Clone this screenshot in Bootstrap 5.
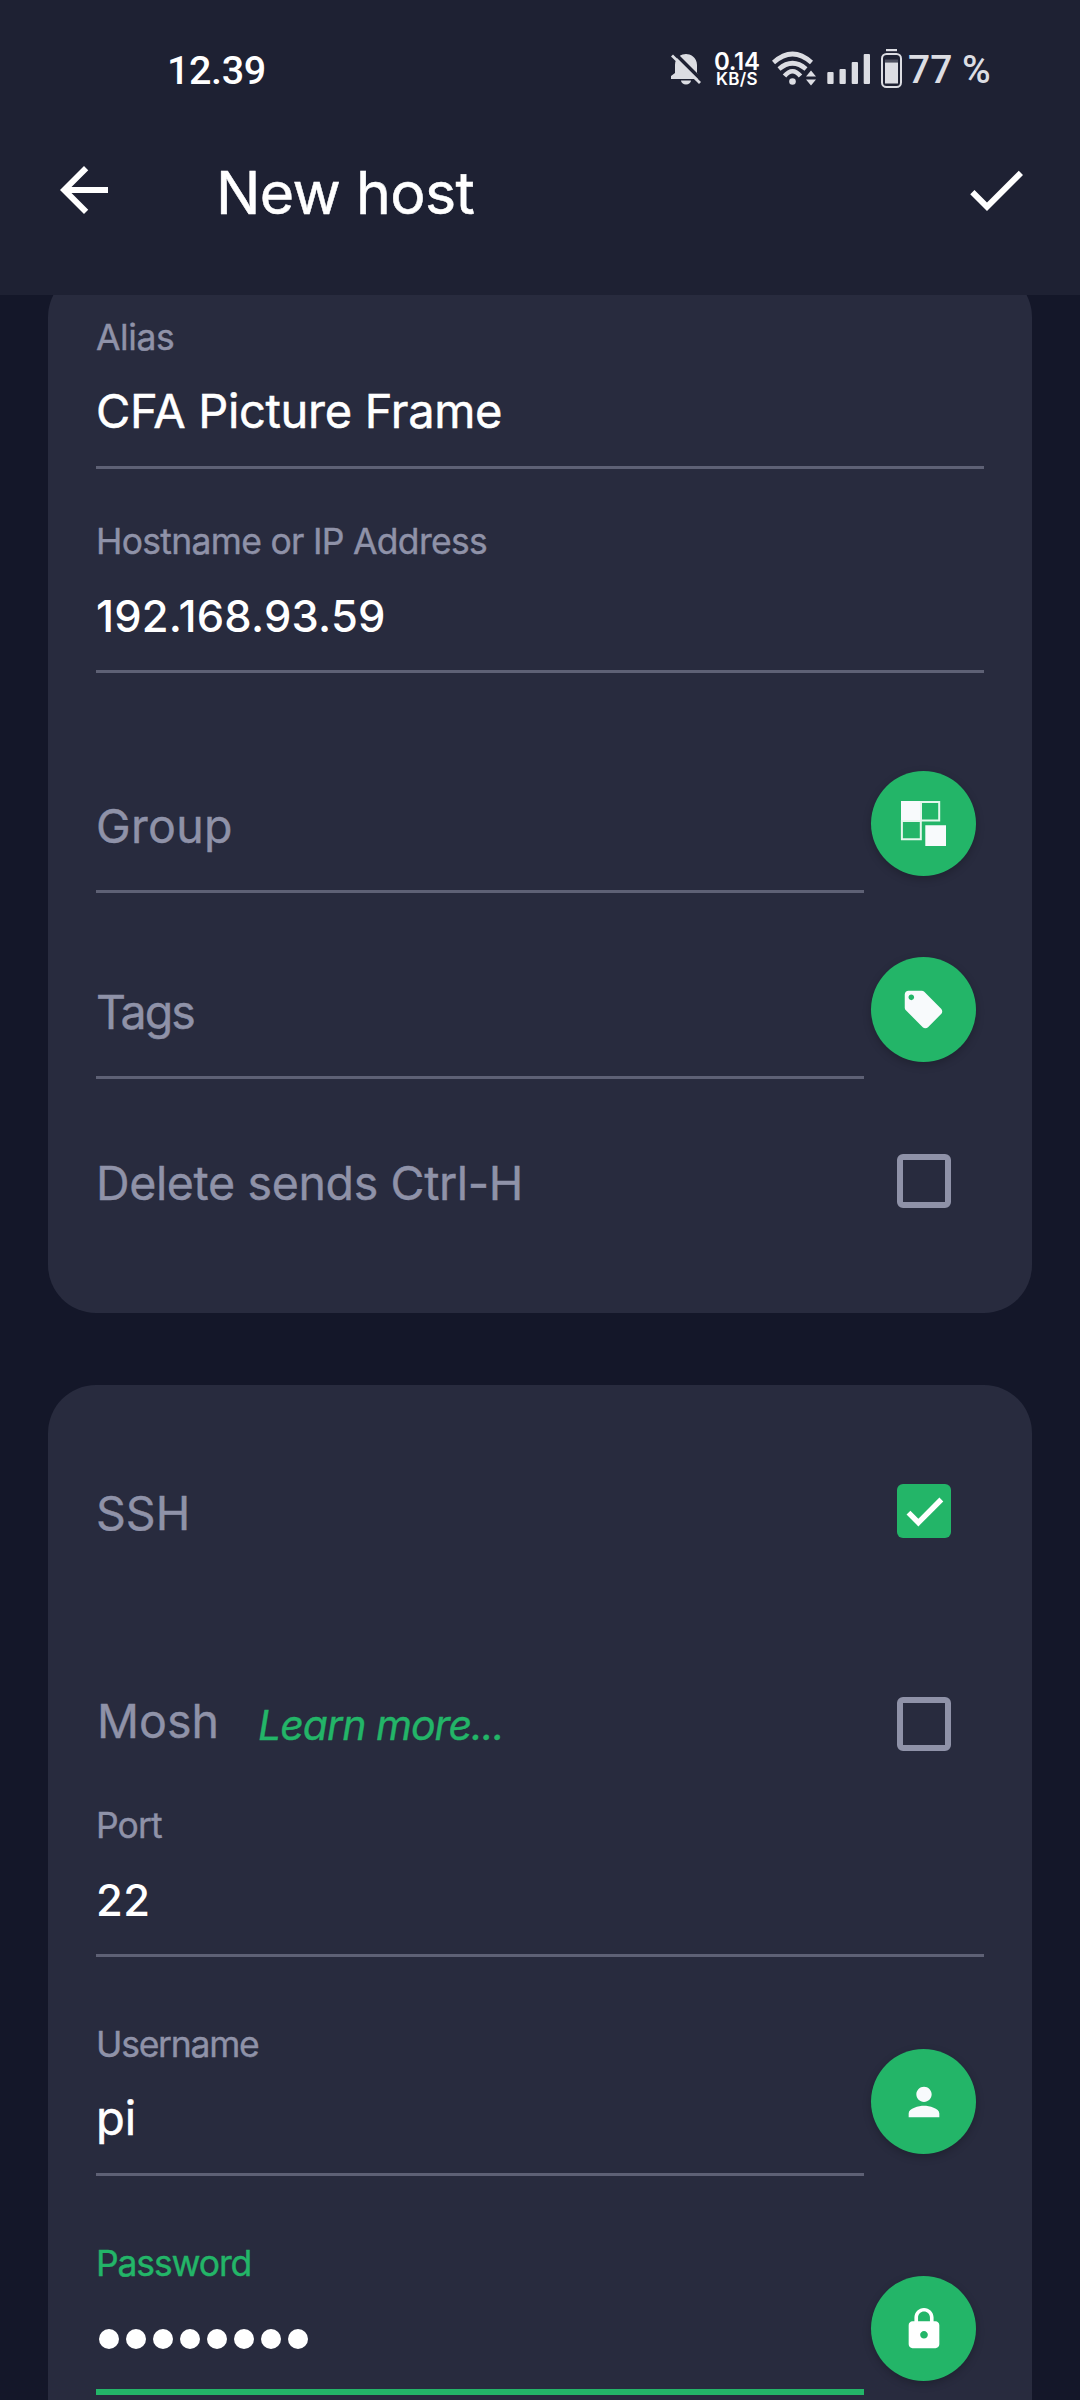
<!DOCTYPE html>
<html lang="en">
<head>
<meta charset="utf-8">
<title>New host</title>
<link rel="stylesheet" href="https://cdn.jsdelivr.net/npm/bootstrap@5.3.0/dist/css/bootstrap.min.css">
<script src="https://cdn.jsdelivr.net/npm/bootstrap@5.3.0/dist/js/bootstrap.bundle.min.js"></script>
<style>
  :root { --green: #23b568; --muted: #8f92a8; --panel: #282b3e; --bar: #1e2133; }
  body { background: #141729; font-family: Inter, "Liberation Sans", sans-serif; color: #fff; }
  .screen { width: 1080px; height: 2400px; overflow: hidden; }
  .topbar { height: 295px; background: var(--bar); z-index: 2; }
  .statusbar { height: 140px; padding: 0 89px 0 167px; font-family: Roboto, sans-serif; font-weight: 500; }
  .clock { font-size: 39.5px; letter-spacing: -.4px; line-height: 61px; }
  .tray { color: #dcdde3; fill: #dcdde3; }
  .tray svg { height: 40px; flex: none; }
  .netspeed { width: 71px; padding-left: 13px; font-family: Inter, sans-serif; font-weight: 600; color: #fff; }
  .netspeed .rate { font-size: 24px; line-height: 19px; letter-spacing: -.3px; }
  .netspeed .unit { font-size: 17px; line-height: 17px; letter-spacing: .3px; padding-left: 2px; }
  .battery-text { width: 83px; margin-left: 6px; font-size: 39px; line-height: 61px; }
  .appbar { padding: 14px 48px 0; }
  .appbar svg { width: 72px; height: 72px; fill: #fff; }
  .title { font-size: 59px; line-height: 77px; letter-spacing: -.65px; margin-left: 96px; font-weight: 400; -webkit-text-stroke: .5px; }
  .content { margin-top: -26px; }
  .panel { margin: 0 48px; padding: 0 48px; border-radius: 48px; background: var(--panel); }
  .panel-first { padding-top: 38px; height: 1044px; }
  .panel-second { padding-top: 96px; height: 1100px; margin-top: 72px; }
  .field { height: 162px; border-bottom: 3px solid #5e6175; }
  .field-label { font-size: 35.5px; line-height: 62px; height: 60px; color: var(--muted); -webkit-text-stroke: .4px; }
  .field-value { font-size: 47px; line-height: 61px; height: 60px; margin-top: 13px; -webkit-text-stroke: .5px; }
  .digits { font-size: 43.5px; font-weight: 500; line-height: 64px; -webkit-text-stroke: 0; }
  .short { width: 768px; flex: none; }
  .field.empty { height: 97px; font-size: 46.5px; line-height: 61px; color: var(--muted); -webkit-text-stroke: .4px; }
  .field.active { border-bottom: 6px solid var(--green); }
  .active .field-label { color: var(--green); }
  .picker-row { height: 122px; }
  .option { height: 60px; font-size: 46.5px; line-height: 64px; color: var(--muted); padding-right: 33px; -webkit-text-stroke: .4px; }
  .option-text { padding-top: 3px; }
  .fab { width: 105px; height: 105px; margin-left: 7px; border: 0; background: var(--green); fill: #f8fafc; box-shadow: 0 3px 8px rgba(0,0,0,.22); padding: 0; }
  .tick { width: 54px; height: 54px; border: 6px solid var(--muted); border-radius: 6px; }
  .tick.on { border: 0; background: var(--green); fill: #fff; }
  .learn { font-size: 41px; line-height: 63px; letter-spacing: -.97px; color: var(--green); }
  .mosh { width: 162px; line-height: 55px; letter-spacing: 0; padding-left: 1px; }
  .dots { gap: 7px; padding: 6px 0 0 3px; }
  .dots i { width: 20px; height: 20px; border-radius: 50%; background: #fff; }
  .gap-hostname { margin-top: 42px; }
  .gap-group { margin-top: 98px; }
  .gap-tags { margin-top: 64px; }
  .gap-delete { margin-top: 72px; }
  .gap-mosh { margin-top: 153px; }
  .gap-port { margin-top: 41px; }
  .gap-login { margin-top: 57px; }
  .drop-user { margin-top: 35px; }
  .drop-pass { margin-top: 43px; }
</style>
</head>
<body>
<div class="screen">
  <header class="topbar position-relative">
    <div class="statusbar d-flex align-items-center">
      <span class="clock">12.39</span>
      <div class="tray d-flex align-items-center ms-auto">
        <svg width="30" viewBox="671 50 30 40">
          <path d="M686 54C690 54 697 57 697 65V73L701 79H671V76L675 73V65C675 57 682 54 686 54ZM681 80.500H691A5 4 0 0 1 681 80.500Z"/>
          <path d="M673 51.500L703 81.500" stroke="#1e2133" stroke-width="3.500"/>
          <path d="M672 55.500L700 83" stroke="#dcdde3" stroke-width="2.800"/>
        </svg>
        <div class="netspeed"><div class="rate">0.14</div><div class="unit">KB/S</div></div>
        <svg width="44" viewBox="772 50 44 40">
          <g fill="none" stroke="#dcdde3" stroke-width="4.600">
            <path d="M773.500 62.500Q792.500 45.500 811.500 62.500"/><path d="M779 69Q792.500 57.500 806 69"/><path d="M784.500 76Q792.500 66.500 800.500 76"/>
          </g>
          <circle cx="792.500" cy="81.500" r="3.300"/>
          <path d="M811 70.500L816 76.500H806ZM811 85.500L816 79.500H806Z"/>
        </svg>
        <svg width="43" viewBox="827 50 43 40" style="margin-left:11px">
          <rect x="827.300" y="72" width="6.300" height="12" rx="1"/><rect x="839.500" y="69" width="6.300" height="15" rx="1"/><rect x="851.700" y="62" width="6.300" height="22" rx="1"/><rect x="863.700" y="54" width="6.300" height="30" rx="1"/>
        </svg>
        <svg width="21" viewBox="881 50 21 40" style="margin-left:11px" overflow="visible">
          <rect x="886" y="49" width="11" height="2.200"/>
          <rect x="882" y="54" width="19" height="33" rx="4.500" fill="none" stroke="#dcdde3" stroke-width="2"/>
          <rect x="885" y="62.500" width="13" height="21"/><rect x="885" y="59.500" width="13" height="3" opacity=".25"/>
        </svg>
        <span class="battery-text text-nowrap">77 %</span>
      </div>
    </div>
    <div class="appbar d-flex align-items-start">
      <svg viewBox="0 0 24 24"><path d="M20 11H7.830l5.590-5.590L12 4l-8 8 8 8 1.410-1.410L7.830 13H20v-2z"/></svg>
      <h1 class="title mb-0">New host</h1>
      <svg class="ms-auto" viewBox="0 0 24 24"><path d="M9 16.170L4.830 12l-1.420 1.410L9 19 21 7l-1.410-1.410z"/></svg>
    </div>
  </header>

  <main class="content">
    <section class="panel panel-first">
      <div class="field">
        <div class="field-label" style="letter-spacing:-.4px">Alias</div>
        <div class="field-value" style="letter-spacing:-.31px">CFA Picture Frame</div>
      </div>
      <div class="field gap-hostname">
        <div class="field-label" style="letter-spacing:-.7px">Hostname or IP Address</div>
        <div class="field-value digits" style="letter-spacing:.2px">192.168.93.59</div>
      </div>
      <div class="picker-row d-flex gap-group">
        <div class="field short empty align-self-end" style="letter-spacing:.3px">Group</div>
        <button class="fab rounded-circle">
          <svg class="d-block" width="105" height="105" viewBox="871 771 105 105">
            <path d="M901 801H921.500V821.500H901ZM925.300 825.300H946V846H925.300Z"/>
            <path d="M921 801.900H939.200V820.600H921ZM901.900 821H920.800V839.200H901.900Z" fill="none" stroke="#e4f7ec" stroke-width="2"/>
          </svg>
        </button>
      </div>
      <div class="picker-row d-flex gap-tags">
        <div class="field short empty align-self-end" style="letter-spacing:-2px">Tags</div>
        <button class="fab rounded-circle d-flex align-items-center justify-content-center">
          <svg width="45" height="45" viewBox="0 0 24 24"><path d="M21.410 11.580l-9-9C12.050 2.220 11.550 2 11 2H4c-1.100 0-2 .9-2 2v7c0 .55.22 1.050.59 1.420l9 9c.36.36.86.58 1.410.58.55 0 1.050-.22 1.410-.59l7-7c.37-.36.59-.86.59-1.410 0-.55-.23-1.060-.59-1.420zM5.500 7C4.670 7 4 6.330 4 5.500S4.670 4 5.500 4 7 4.670 7 5.500 6.330 7 5.500 7z"/></svg>
        </button>
      </div>
      <div class="option gap-delete d-flex align-items-center justify-content-between">
        <span class="option-text" style="letter-spacing:-.36px">Delete sends Ctrl-H</span>
        <span class="tick"></span>
      </div>
    </section>

    <section class="panel panel-second">
      <div class="option d-flex align-items-center justify-content-between">
        <span class="option-text">SSH</span>
        <span class="tick on d-flex align-items-center justify-content-center">
          <svg width="49" height="49" viewBox="0 0 24 24"><path d="M9 15.500L5.100 11.600 3.200 13.500 9 19.300 21.200 7.100 19.300 5.200z"/></svg>
        </span>
      </div>
      <div class="option gap-mosh d-flex align-items-start">
        <span class="mosh">Mosh</span>
        <em class="learn">Learn more...</em>
        <span class="tick ms-auto align-self-center"></span>
      </div>
      <div class="field gap-port">
        <div class="field-label" style="letter-spacing:-.9px">Port</div>
        <div class="field-value digits" style="letter-spacing:.5px">22</div>
      </div>
      <div class="d-flex gap-login">
        <div class="field short">
          <div class="field-label" style="letter-spacing:-1.250px">Username</div>
          <div class="field-value">pi</div>
        </div>
        <button class="fab rounded-circle d-flex align-items-center justify-content-center drop-user">
          <svg width="46" height="46" viewBox="0 0 24 24"><path d="M12 12c2.210 0 4-1.790 4-4s-1.790-4-4-4-4 1.790-4 4 1.790 4 4 4zm0 2c-2.670 0-8 1.340-8 4v2h16v-2c0-2.660-5.330-4-8-4z"/></svg>
        </button>
      </div>
      <div class="d-flex gap-login">
        <div class="field short active">
          <div class="field-label" style="letter-spacing:-1.150px">Password</div>
          <div class="field-value dots d-flex align-items-center"><i></i><i></i><i></i><i></i><i></i><i></i><i></i><i></i></div>
        </div>
        <button class="fab rounded-circle d-flex align-items-center justify-content-center drop-pass">
          <svg width="46" height="46" viewBox="0 0 24 24" fill="#fff"><path d="M18 8h-1V6c0-2.760-2.240-5-5-5S7 3.240 7 6v2H6c-1.100 0-2 .9-2 2v10c0 1.100.9 2 2 2h12c1.100 0 2-.9 2-2V10c0-1.100-.9-2-2-2zm-6 9c-1.100 0-2-.9-2-2s.9-2 2-2 2 .9 2 2-.9 2-2 2zm3.100-9H8.900V6c0-1.710 1.390-3.100 3.100-3.100 1.710 0 3.100 1.390 3.100 3.100v2z"/></svg>
        </button>
      </div>
    </section>
  </main>
</div>
</body>
</html>
